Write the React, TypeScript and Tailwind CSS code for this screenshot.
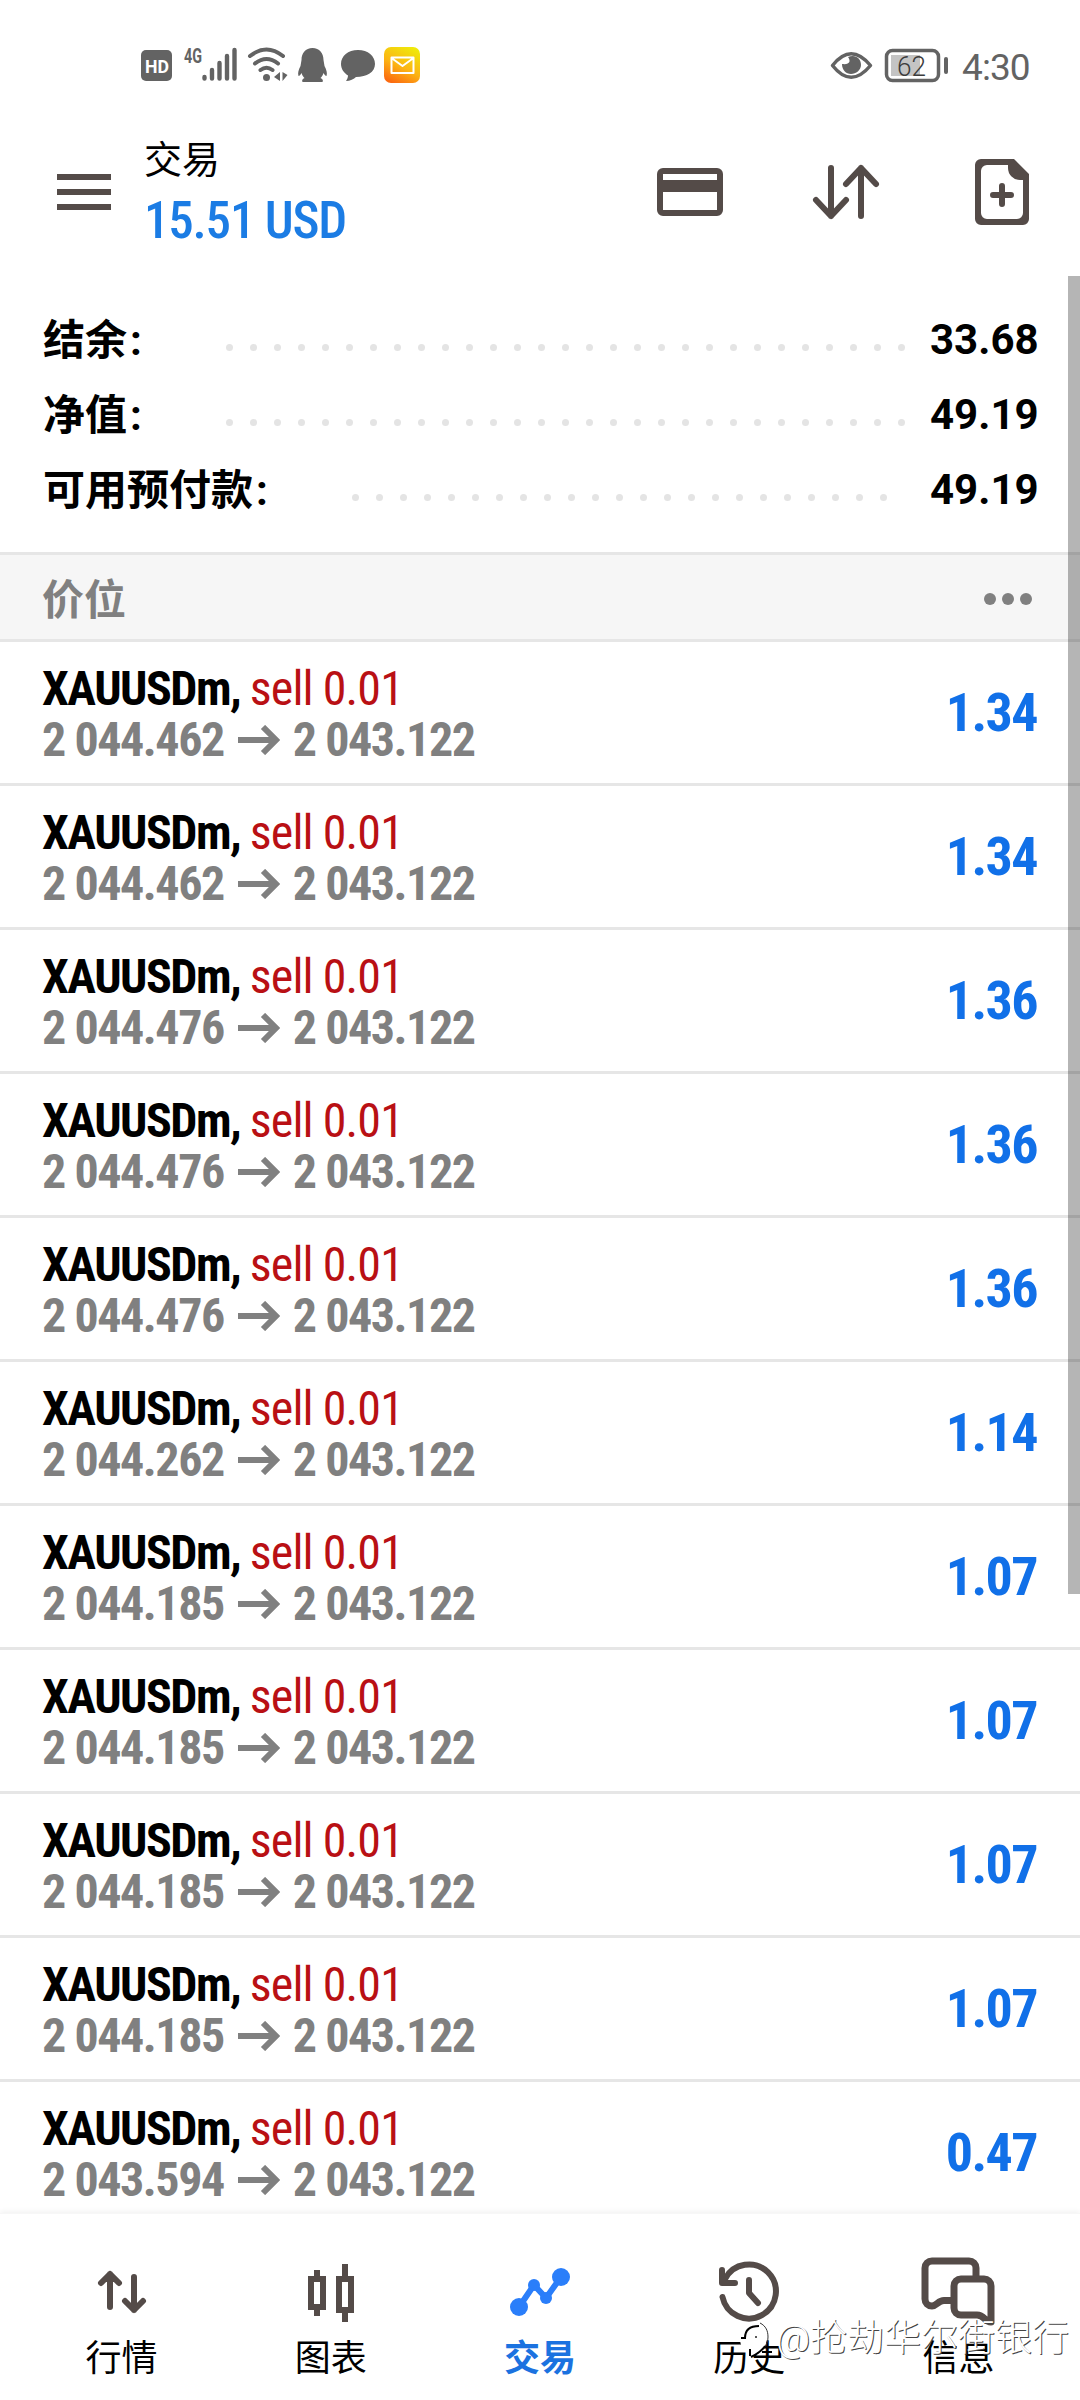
import React from 'react';

interface Position {
  open: string;
  current: string;
  profit: string;
}

const positions: Position[] = [
  { open: '2 044.462', current: '2 043.122', profit: '1.34' },
  { open: '2 044.462', current: '2 043.122', profit: '1.34' },
  { open: '2 044.476', current: '2 043.122', profit: '1.36' },
  { open: '2 044.476', current: '2 043.122', profit: '1.36' },
  { open: '2 044.476', current: '2 043.122', profit: '1.36' },
  { open: '2 044.262', current: '2 043.122', profit: '1.14' },
  { open: '2 044.185', current: '2 043.122', profit: '1.07' },
  { open: '2 044.185', current: '2 043.122', profit: '1.07' },
  { open: '2 044.185', current: '2 043.122', profit: '1.07' },
  { open: '2 044.185', current: '2 043.122', profit: '1.07' },
  { open: '2 043.594', current: '2 043.122', profit: '0.47' },
];

const summary = [
  { label: '结余', value: '33.68', dots: 29, gap: 'pr-[25px]' },
  { label: '净值', value: '49.19', dots: 29, gap: 'pr-[25px]' },
  { label: '可用预付款', value: '49.19', dots: 23, gap: 'pr-[43px]' },
];

const StatusBar: React.FC = () => (
  <div className="flex h-[132px] items-center justify-between pl-[140px] pr-[50px] text-[#636363]">
    <svg width="284" height="52" viewBox="140 40 284 52" fill="#636363">
      <rect x="141" y="50" width="31" height="31" rx="5" />
      <text x="145" y="73" fill="#fff" fontSize="19" fontWeight="700" textLength="24" lengthAdjust="spacingAndGlyphs">HD</text>
      <text x="184" y="62.500" fontSize="20" fontWeight="700" textLength="18" lengthAdjust="spacingAndGlyphs">4G</text>
      <g stroke="#636363" strokeWidth="4.4" strokeLinecap="round">
        <path d="M204.5 77v1.5M212 70v8.500M219.500 63v15.500M227 56v22.500M234.500 50v28.500" />
      </g>
      <g fill="none" stroke="#636363" strokeWidth="4" strokeLinecap="round">
        <path d="M250 56Q266.500 43 283 56M255 63.500Q266.500 54.500 278 63.500M260.500 70Q266.500 65.500 272.500 70" />
      </g>
      <circle cx="266.500" cy="77.500" r="3.500" />
      <path d="M280 72v9l-6-4zM282.500 72v9l5-6z" />
      <path d="M312.500 48c-7 0-11 5-11 12l-1 6c-2 4-3 7-2 10 1 0 2-1 3-3 1 3 2 4 3 5-2 1-3 2-2 4h20c1-2 0-3-2-4 1-1 2-2 3-5 1 2 2 3 3 3 1-3 0-6-2-10l-1-6c0-7-4-12-11-12z" />
      <path d="M358 50c-10 0-17 6-17 14 0 5 3 9 7 11.500 0 2-1 4-2 5.500 4 0 8-2 10-4 11 0 19-5 19-13s-7-14-17-14z" />
      <defs>
        <linearGradient id="mail" x1="0.750" y1="0" x2="0.250" y2="1">
          <stop offset="0" stopColor="#efe90a" />
          <stop offset="0.550" stopColor="#fcb414" />
          <stop offset="1" stopColor="#fb6a10" />
        </linearGradient>
      </defs>
      <rect x="384" y="47" width="36" height="36" rx="7" fill="url(#mail)" />
      <path d="M391.500 57.500h22v15.500h-22zM391.500 58l11 8 11-8" fill="none" stroke="#fff" strokeWidth="2" strokeLinejoin="round" />
    </svg>
    <div className="flex items-center">
      <svg width="120" height="40" viewBox="830 46 120 40" fill="none" stroke="#636363">
        <path d="M832.500 65.500Q851 42 870.500 65.500Q851 89 832.500 65.500z" strokeWidth="3.500" strokeLinejoin="round" />
        <path d="M848 57c3 4 2 8-6 7 0 6 4 10 9 10s10-4 10-9c0-7-6-11-13-8z" fill="#636363" stroke="none" />
        <rect x="891" y="55" width="29" height="21" fill="#c4c4c4" stroke="none" />
        <rect x="886.500" y="50.500" width="52" height="30" rx="6" strokeWidth="3.500" />
        <path d="M946 59v13" strokeWidth="4" strokeLinecap="round" />
        <text x="897" y="75.500" fontSize="27" fontWeight="300" fill="#3c3c3c" stroke="none" textLength="29" lengthAdjust="spacingAndGlyphs">62</text>
      </svg>
      <span className="ml-3 w-[68px] whitespace-nowrap pt-[2px] text-[37px] leading-none tracking-[-0.9px]">4:30</span>
    </div>
  </div>
);

const Header: React.FC = () => (
  <div className="flex h-[144px] items-start pl-[57px] pr-[51px]">
    <div className="mt-[42px] flex w-[54px] flex-col gap-[9px]">
      <div className="h-[6px] bg-[#544b48]" />
      <div className="h-[6px] bg-[#544b48]" />
      <div className="h-[6px] bg-[#544b48]" />
    </div>
    <div className="ml-[33px] flex-1">
      <div className="mt-[3px] text-[38px] leading-[50px] text-black">交易</div>
      <div className="mt-[8px] text-[51px] leading-[56px] font-[480] tracking-[-1.2px] text-[#1b7ce4] [font-stretch:75%]">15.51 USD</div>
    </div>
    <svg className="mt-[27px]" width="372" height="66" viewBox="657 159 372 66" fill="none" stroke="#544b48" strokeWidth="6" strokeLinecap="round" strokeLinejoin="round">
      <rect x="660" y="171" width="60" height="42" rx="3" />
      <path d="M660 186h60" strokeWidth="12" strokeLinecap="butt" />
      <path d="M831 168v48M816 200l15 16 15-16" />
      <path d="M861 216v-48M846 184l15-16 15 16" />
      <path d="M981 159h33l15 15v45a6 6 0 0 1-6 6h-42a6 6 0 0 1-6-6v-54a6 6 0 0 1 6-6zM987 165a6 6 0 0 0-6 6v42a6 6 0 0 0 6 6h30a6 6 0 0 0 6-6v-33h-3a12 12 0 0 1-12-12v-3z" fill="#544b48" fillRule="evenodd" stroke="none" />
      <path d="M993 195h18M1002 186v18" />
    </svg>
  </div>
);

const Summary: React.FC = () => (
  <div className="flex h-[276px] flex-col pl-[43px] pr-[44px] pt-[26px]">
    {summary.map((row) => (
      <div key={row.label} className="flex h-[75px] items-center text-[42px] font-bold text-black">
        <span className="flex-1 whitespace-nowrap pt-[2px]">
          {row.label}
          <span className="ml-[3px]">:</span>
        </span>
        <div className={`flex gap-[17px] pt-[15px] ${row.gap}`}>
          {Array.from({ length: row.dots }, (_, i) => (
            <span key={i} className="h-[7px] w-[7px] rounded-full bg-[#e4e4e4]" />
          ))}
        </div>
        <span className="w-[106px] text-right">{row.value}</span>
      </div>
    ))}
  </div>
);

const PositionRow: React.FC<{ position: Position }> = ({ position }) => (
  <div className="flex h-[144px] shrink-0 items-center justify-between border-b-[3px] border-[#e6e6e6] pl-[42px] pr-[43px] pt-[3px] [font-stretch:75%]">
    <div className="text-[48px] leading-[51px]">
      <div className="whitespace-pre">
        <span className="font-bold tracking-[-1.5px] text-black">XAUUSDm, </span>
        <span className="tracking-[-0.9px] text-[#b91014]">sell 0.01</span>
      </div>
      <div className="flex items-center font-bold tracking-[-1.45px] text-[#808080]">
        <span>{position.open}</span>
        <svg className="mx-[13px]" width="43" height="30" viewBox="0 0 43 30" fill="none" stroke="#808080" strokeWidth="6">
          <path d="M1 15h38M26 2l13 13-13 13" />
        </svg>
        <span>{position.current}</span>
      </div>
    </div>
    <span className="pb-[3px] text-[54px] font-bold tracking-[-1.6px] text-[#1170e8]">{position.profit}</span>
  </div>
);

const navItems = [
  {
    label: '行情',
    icon: <path d="M34 55V22M25 31l9-9 9 9M58 25v33M49 49l9 9 9-9" strokeLinecap="round" strokeLinejoin="round" />,
  },
  {
    label: '图表',
    icon: <path d="M26 27h12v28H26zM32 18v9M32 55v9M54 27h12v31H54zM60 12v15M60 58v12" />,
  },
  {
    label: '交易',
    active: true,
    icon: (
      <g fill="#2a7efa" stroke="#2a7efa">
        <path d="M25 55L40 33L52 46L67 25" fill="none" />
        <g stroke="none">
          <circle cx="25" cy="55" r="9" />
          <circle cx="40" cy="33" r="6" />
          <circle cx="52" cy="46" r="6" />
          <circle cx="67" cy="25" r="9" />
        </g>
      </g>
    ),
  },
  {
    label: '历史',
    icon: <path d="M19.500 45A27 27 0 1 0 22 27M19 18v13h13M46 28v13l9 10" strokeLinecap="round" strokeLinejoin="round" />,
  },
  {
    label: '信息',
    icon: (
      <path
        d="M41 48.500H32c-6 0-7 5.500-12 5.500-4 0-7-3-7-7V16a7 7 0 0 1 7-7h37a7 7 0 0 1 7 7v10M49 27h23a7 7 0 0 1 7 7v36c-7 0-6-7-14-7H49a7 7 0 0 1-7-7V34a7 7 0 0 1 7-7z"
        strokeWidth="7"
        strokeLinejoin="round"
      />
    ),
  },
];

const Watermark: React.FC = () => (
  <div className="absolute right-[11px] top-[100px] flex items-center">
    <svg className="mr-[-2px]" width="42" height="50" viewBox="0 0 42 50" fill="none">
      <path d="M4 24c0-10 6-15 14-15s13 6 13 14c0 9-5 14-13 18l-6 3V36c-5 0-8-4-8-12z" fill="#fff" />
      <path d="M5 24h4c0-7 4-12 14-12M14 42v-7" stroke="#000" strokeWidth="2" />
      <path d="M24 9c6 3 8 8 8 14 0 8-5 13-12 17" stroke="#333" strokeWidth="1" />
      <path d="M29 32c-3 5-8 8-14 11M26 38h10" stroke="#000" strokeWidth="2" />
      <circle cx="20" cy="23" r="1" fill="#222" />
    </svg>
    <span className="whitespace-nowrap text-[37px] leading-[50px] font-light text-white [text-shadow:1px_1px_0_#444]">@抢劫华尔街银行</span>
  </div>
);

const BottomNav: React.FC = () => (
  <div className="relative h-[187px] border-t border-[#f7f7f7] bg-white px-[17px] shadow-[0_-2px_5px_rgba(0,0,0,0.05)]">
    <div className="grid grid-cols-5">
      {navItems.map((item) => (
        <div key={item.label} className="flex flex-col items-center pt-[38px]">
          <svg width="92" height="76" viewBox="0 0 92 76" fill="none" stroke="#544b48" strokeWidth="6">
            {item.icon}
          </svg>
          <span className={item.active ? 'mt-[6px] text-[36px] leading-[50px] font-bold text-[#1b72e0]' : 'mt-[6px] text-[36px] leading-[50px] text-black'}>
            {item.label}
          </span>
        </div>
      ))}
    </div>
    <Watermark />
  </div>
);

const App: React.FC = () => {
  return (
    <div className="relative flex h-[2400px] w-[1080px] flex-col overflow-hidden bg-white font-['Roboto','Noto_Sans_CJK_SC',sans-serif]">
      <StatusBar />
      <Header />
      <Summary />
      <div className="flex h-[90px] items-center justify-between border-y-[3px] border-[#e6e6e6] bg-[#f6f6f6] pl-[42px] pr-[48px] pt-[3px]">
        <span className="pt-[4px] text-[42px] font-bold text-[#808080]">价位</span>
        <div className="flex gap-[6px]">
          <span className="h-3 w-3 rounded-full bg-[#808080]" />
          <span className="h-3 w-3 rounded-full bg-[#808080]" />
          <span className="h-3 w-3 rounded-full bg-[#808080]" />
        </div>
      </div>
      <div className="flex min-h-0 flex-1 flex-col overflow-hidden">
        {positions.map((position, index) => (
          <PositionRow key={index} position={position} />
        ))}
      </div>
      <BottomNav />
      {/* scroll thumb */}
      <div className="absolute right-0 top-[276px] h-[1318px] w-3 bg-black/29" />
    </div>
  );
};

export default App;
